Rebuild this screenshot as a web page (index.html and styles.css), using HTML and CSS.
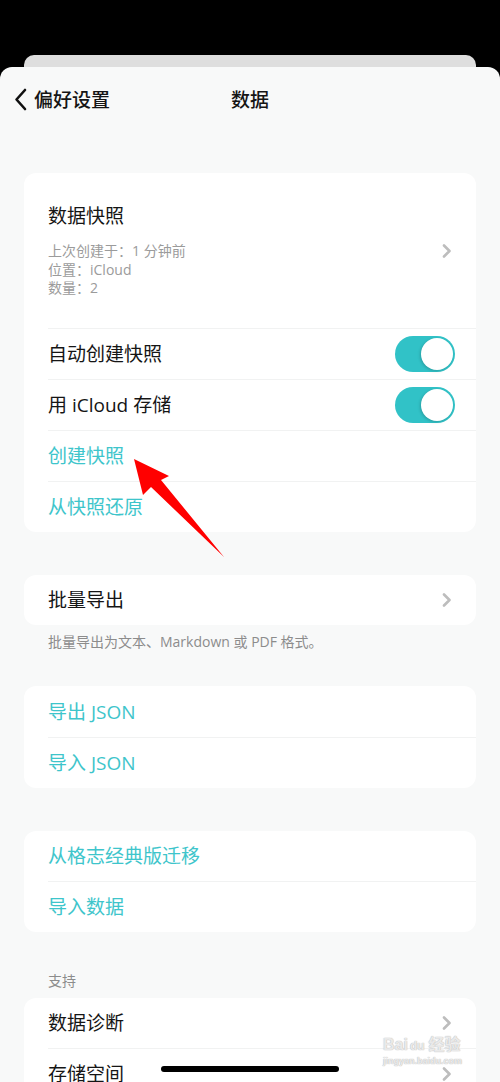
FILE: index.html
```html
<!DOCTYPE html>
<html lang="zh">
<head>
  <meta charset="UTF-8">
  <meta name="viewport" content="width=device-width, initial-scale=1.0">
  <title>数据</title>
  <link rel="stylesheet" href="styles.css">
</head>
<body>
  <div class="page">
    <div class="sheet-behind"></div>
    <div class="sheet">
      <!-- 顶部导航 -->
      <div class="nav">
        <div class="nav-back">
          <svg class="back-icon" width="13" height="23" viewBox="0 0 13 23"><path d="M11 2 L2.5 11.5 L11 21" fill="none" stroke="#111" stroke-width="2.6" stroke-linecap="round" stroke-linejoin="round"/></svg>
          <span>偏好设置</span>
        </div>
        <div class="nav-title">数据</div>
      </div>

      <!-- 快照 -->
      <div class="card card-first">
        <div class="row row-snapshot">
          <div class="snapshot-text">
            <div class="label">数据快照</div>
            <div class="sub">上次创建于：1 分钟前<br>位置：iCloud<br>数量：2</div>
          </div>
          <svg class="chevron" width="10" height="14" viewBox="0 0 10 14"><path d="M2 1.5 L7.5 7 L2 12.5" fill="none" stroke="#bdbdbd" stroke-width="2.6" stroke-linecap="round" stroke-linejoin="round"/></svg>
        </div>
        <div class="row">
          <span class="label">自动创建快照</span>
          <div class="toggle"><div class="knob"></div></div>
        </div>
        <div class="row">
          <span class="label">用 iCloud 存储</span>
          <div class="toggle"><div class="knob"></div></div>
        </div>
        <div class="row"><span class="label link">创建快照</span></div>
        <div class="row"><span class="label link">从快照还原</span></div>
      </div>

      <!-- 批量导出 -->
      <div class="card card-export">
        <div class="row">
          <span class="label">批量导出</span>
          <svg class="chevron" width="10" height="14" viewBox="0 0 10 14"><path d="M2 1.5 L7.5 7 L2 12.5" fill="none" stroke="#bdbdbd" stroke-width="2.6" stroke-linecap="round" stroke-linejoin="round"/></svg>
        </div>
      </div>
      <p class="footer-note">批量导出为文本、Markdown 或 PDF 格式。</p>

      <!-- JSON -->
      <div class="card card-json">
        <div class="row"><span class="label link">导出 JSON</span></div>
        <div class="row"><span class="label link">导入 JSON</span></div>
      </div>

      <!-- 迁移 -->
      <div class="card card-migrate">
        <div class="row"><span class="label link">从格志经典版迁移</span></div>
        <div class="row"><span class="label link">导入数据</span></div>
      </div>

      <div class="section-header">支持</div>
      <div class="card card-support">
        <div class="row">
          <span class="label">数据诊断</span>
          <svg class="chevron" width="10" height="14" viewBox="0 0 10 14"><path d="M2 1.5 L7.5 7 L2 12.5" fill="none" stroke="#bdbdbd" stroke-width="2.6" stroke-linecap="round" stroke-linejoin="round"/></svg>
        </div>
        <div class="row">
          <span class="label">存储空间</span>
          <svg class="chevron" width="10" height="14" viewBox="0 0 10 14"><path d="M2 1.5 L7.5 7 L2 12.5" fill="none" stroke="#bdbdbd" stroke-width="2.6" stroke-linecap="round" stroke-linejoin="round"/></svg>
        </div>
      </div>
    </div>

    <!-- 标注箭头 -->
    <svg class="annotation" width="500" height="1082" viewBox="0 0 500 1082">
      <polygon points="134,459 169,476 161,480 224,557 151,487 143,495" fill="#ff0000"/>
    </svg>

    <!-- 水印 -->
    <div class="watermark">
      <div class="wm-top">Bai<span class="wm-du">du</span>经验</div>
      <div class="wm-url">jingyan.baidu.com</div>
    </div>

    <div class="home-indicator"></div>
  </div>
</body>
</html>
```

FILE: styles.css
```css
/* 颜色变量 */
:root {
  --sheet-bg: #f8f9f9;
  --card-bg: #ffffff;
  --text-color: #151515;
  --sub-text: #9b9b9b;
  --note-text: #8c8c8c;
  --teal: #31c2c7;
  --link: #3ec5cb;
  --divider: #f1f2f2;
}
/* 基本样式 */
html, body {
  margin: 0;
  padding: 0;
  background: #000;
}
body {
  font-family: "Open Sans", "Noto Sans CJK SC", sans-serif;
  color: var(--text-color);
}
.page {
  position: relative;
  width: 500px;
  height: 1082px;
  overflow: hidden;
  padding-top: 55px;
  box-sizing: border-box;
}
.sheet-behind {
  height: 12px;
  margin: 0 24px;
  background: #dedede;
  border-radius: 10px 10px 0 0;
}
.sheet {
  background: var(--sheet-bg);
  border-radius: 12px 12px 0 0;
  min-height: 1020px;
  padding: 0 24px;
}
/* 导航栏 */
.nav {
  position: relative;
  height: 66px;
  display: flex;
  align-items: center;
  justify-content: center;
}
.nav-back {
  position: absolute;
  left: -10px;
  top: -1px;
  height: 66px;
  display: flex;
  align-items: center;
  gap: 7px;
  font-size: 19px;
  font-weight: 500;
}
.nav-title {
  font-size: 19px;
  font-weight: 500;
  margin-top: -2px;
}
/* 卡片 */
.card {
  background: var(--card-bg);
  border-radius: 12px;
  overflow: hidden;
}
.card-first { margin-top: 40px; }
.card-export { margin-top: 43px; }
.card-json { margin-top: 35px; }
.card-migrate { margin-top: 43px; }
.row {
  display: flex;
  align-items: center;
  justify-content: space-between;
  min-height: 50.2px;
  margin-left: 24px;
  padding-right: 21px;
}
.row + .row {
  border-top: 1px solid var(--divider);
}
.label {
  font-size: 19px;
  line-height: 24px;
}
.link {
  color: var(--link);
}
.row-snapshot {
  padding-top: 31px;
  padding-bottom: 30px;
}
.sub {
  margin-top: 14px;
  font-size: 14px;
  line-height: 18.5px;
  color: var(--sub-text);
}
.chevron {
  margin-right: 3px;
}
/* 开关 */
.toggle {
  width: 60px;
  height: 36px;
  border-radius: 18px;
  background: var(--teal);
  display: flex;
  align-items: center;
  justify-content: flex-end;
  padding: 0 2px;
  box-sizing: border-box;
}
.knob {
  width: 32px;
  height: 32px;
  border-radius: 50%;
  background: #fff;
  box-shadow: -1px 1px 3px rgba(0, 0, 0, 0.18);
}
/* 提示信息 */
.footer-note {
  margin: 8px 0 0 24px;
  font-size: 14px;
  line-height: 18px;
  color: var(--note-text);
}
.section-header {
  margin: 40px 0 0 24px;
  font-size: 14px;
  line-height: 18px;
  color: var(--note-text);
}
.card-support { margin-top: 8px; }
/* 覆盖层 */
.annotation {
  position: absolute;
  left: 0;
  top: 0;
  pointer-events: none;
}
.watermark {
  position: absolute;
  left: 383px;
  top: 1036px;
  color: rgba(255, 255, 255, 0.7);
  text-shadow: 0 0 1px #bbb, 0 0 1px #bbb;
  font-family: "Liberation Sans", "Noto Sans CJK SC", sans-serif;
}
.wm-top {
  font-size: 16px;
  font-weight: bold;
  line-height: 18px;
}
.wm-du {
  font-size: 12px;
  margin: 0 4px 0 2px;
}
.wm-url {
  font-size: 9px;
  line-height: 12px;
  font-weight: bold;
}
.home-indicator {
  position: absolute;
  left: 161px;
  bottom: 10px;
  width: 178px;
  height: 6px;
  border-radius: 3px;
  background: #000;
}
```
